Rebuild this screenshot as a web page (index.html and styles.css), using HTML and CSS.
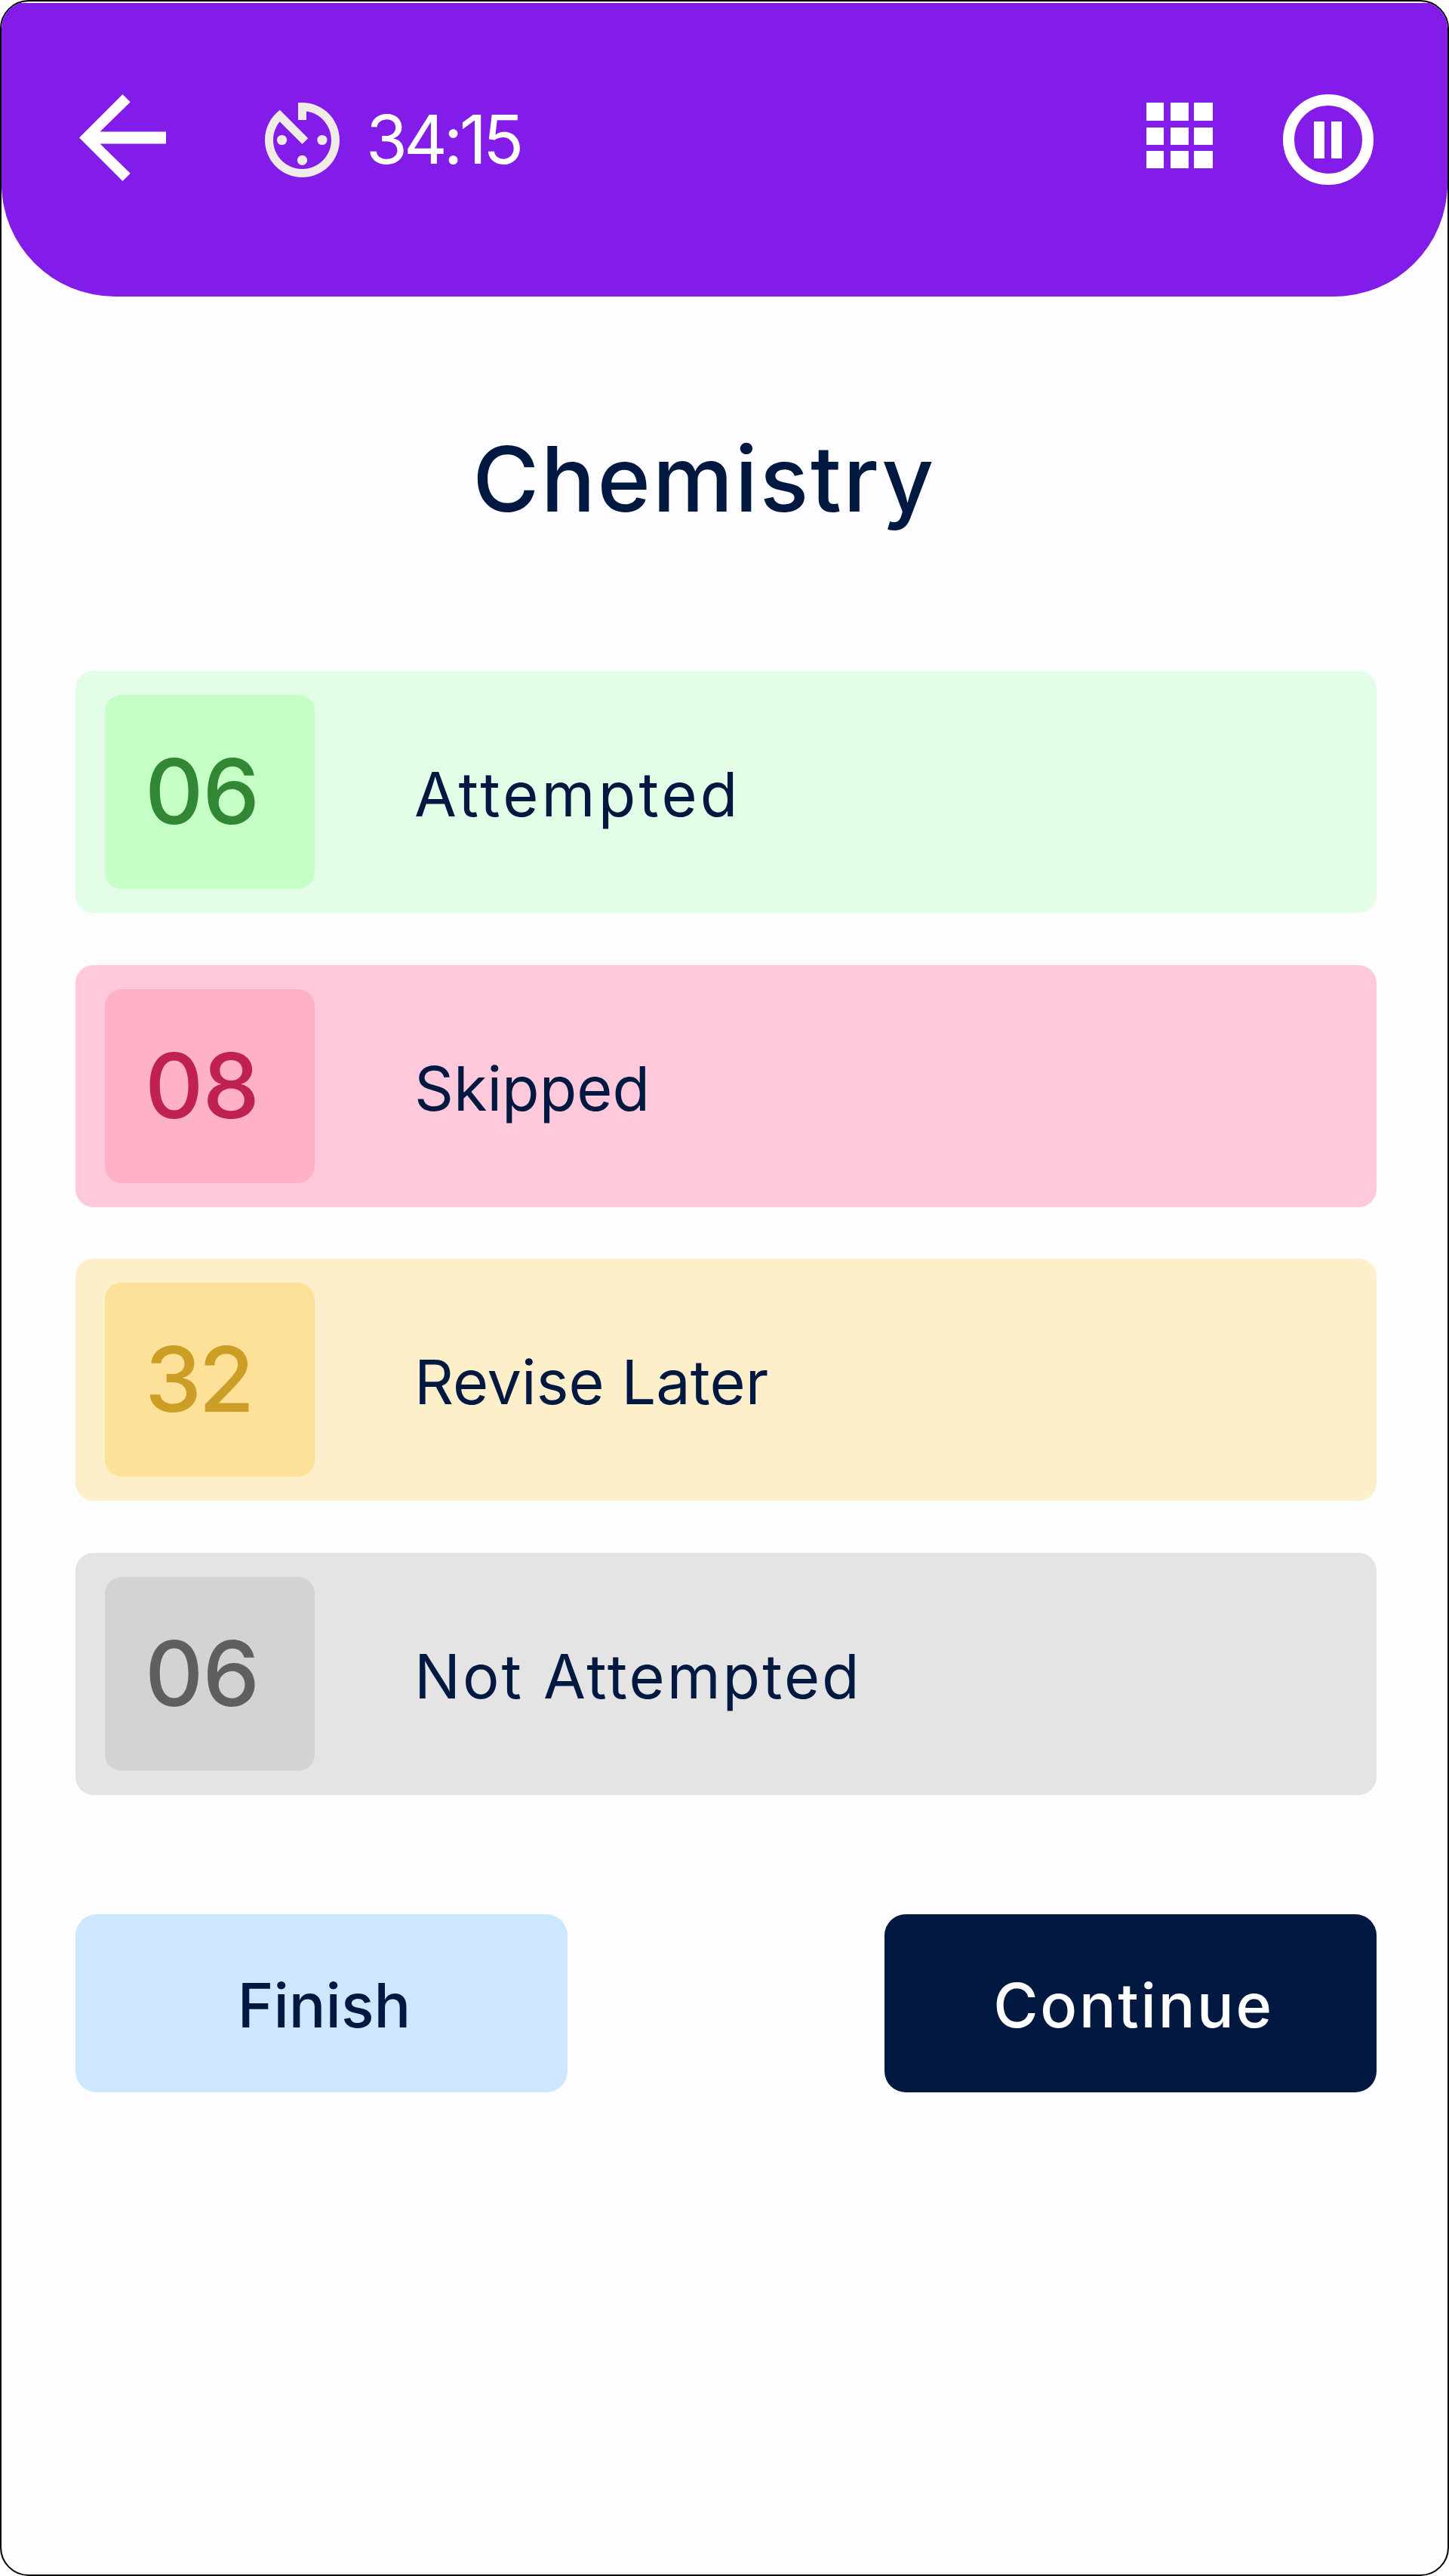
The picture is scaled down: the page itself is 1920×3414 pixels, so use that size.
FILE: index.html
```html
<!DOCTYPE html>
<html lang="en">
<head>
  <meta charset="UTF-8">
  <meta name="viewport" content="width=device-width, initial-scale=1.0">
  <title>Chemistry</title>
  <link rel="stylesheet" href="styles.css">
</head>
<body>
  <div class="screen">
    <header class="header">
      <svg class="back" viewBox="4 4 16 16"><path d="M20 10.9H7.83l5.59-5.49L12 4l-8 8 8 8 1.41-1.41L7.83 13.1H20z"/></svg>
      <svg class="timer-icon" viewBox="3 3 18 18">
        <path d="M11 3v4.2h2V5.08c3.39.49 6 3.39 6 6.92 0 3.87-3.13 7-7 7s-7-3.13-7-7c0-1.68.59-3.22 1.58-4.42L12 13l1.41-1.41-6.8-6.8C4.42 6.45 3 9.05 3 12c0 4.97 4.02 9 9 9s9-4.03 9-9-4.03-9-9-9z"/>
        <circle cx="7.1" cy="12" r="1.2"/>
        <circle cx="16.8" cy="12" r="1.2"/>
        <circle cx="12" cy="16.9" r="1.2"/>
      </svg>
      <span class="time">34:15</span>
      <svg class="grid-icon" viewBox="0 0 88 88">
        <path d="M0 0h23v24H0zM32 0h24v24H32zM63 0h25v24H63zM0 33h23v23H0zM32 33h24v23H32zM63 33h25v23H63zM0 64h23v23H0zM32 64h24v23H32zM63 64h25v23H63z"/>
      </svg>
      <svg class="pause-icon" viewBox="0 0 120 120">
        <circle cx="60" cy="60" r="52.5"/>
        <path d="M41 36h14v49H41zM64 36h14v49H64z"/>
      </svg>
    </header>

    <h1 class="title">Chemistry</h1>

    <div class="list">
      <div class="row green">
        <div class="count">06</div>
        <div class="label attempted">Attempted</div>
      </div>
      <div class="row pink">
        <div class="count">08</div>
        <div class="label">Skipped</div>
      </div>
      <div class="row yellow">
        <div class="count">32</div>
        <div class="label">Revise Later</div>
      </div>
      <div class="row grey">
        <div class="count">06</div>
        <div class="label not-attempted">Not Attempted</div>
      </div>
    </div>

    <div class="buttons">
      <button class="btn finish">Finish</button>
      <button class="btn continue">Continue</button>
    </div>
  </div>
</body>
</html>
```
FILE: styles.css
```css
* {
  margin: 0;
  padding: 0;
  box-sizing: border-box;
  font-family: Inter, "Open Sans", sans-serif;
}
body {
  background-color: #fff;
}
.screen {
  width: 1920px;
  height: 3414px;
  border: 2px solid #000;
  border-radius: 38px;
  background-color: #fdfdff;
  padding-top: 2px;
  overflow: hidden;
  color: #011841;
}
.header {
  height: 389px;
  background-color: #831be9;
  border-radius: 0 0 150px 150px;
  display: flex;
  align-items: flex-start;
  padding: 121px 98px 0 103px;
}
.header svg {
  fill: #fff;
  flex: none;
}
.header .back {
  width: 115px;
  height: 115px;
}
.header .timer-icon {
  width: 99px;
  height: 99px;
  margin: 11px 0 0 131px;
  fill: #efece8;
}
.time {
  color: #fff;
  font-size: 89px;
  line-height: 120px;
  letter-spacing: -4.8px;
  margin-left: 35px;
}
.header .grid-icon {
  width: 88px;
  height: 88px;
  margin: 11px 93px 0 auto;
}
.header .pause-icon {
  width: 120px;
  height: 120px;
}
.pause-icon circle {
  fill: none;
  stroke: #fff;
  stroke-width: 15;
}
.title {
  height: 496px;
  display: flex;
  align-items: center;
  justify-content: center;
  padding: 0 54px 14px 0;
  font-size: 120px;
  font-weight: 500;
  letter-spacing: 2.6px;
}
.list {
  display: flex;
  flex-direction: column;
  gap: 68.5px;
  padding: 0 94px 0 98px;
}
.row {
  height: 321px;
  border-radius: 24px;
  display: flex;
  align-items: center;
  padding-left: 39px;
}
.count {
  width: 278px;
  height: 257px;
  border-radius: 22px;
  padding-left: 53px;
  font-size: 120px;
  font-weight: 500;
  line-height: 255px;
  letter-spacing: -1px;
}
.label {
  margin-left: 132px;
  padding-top: 7px;
  font-size: 81px;
  line-height: 100px;
  white-space: nowrap;
}
.attempted {
  letter-spacing: 4.2px;
}
.not-attempted {
  letter-spacing: 3px;
}
.green {
  background-color: #e4fde6;
}
.green .count {
  background-color: #c5ffc6;
  color: #318733;
}
.pink {
  background-color: #fecadb;
}
.pink .count {
  background-color: #ffb1c7;
  color: #bf2150;
}
.yellow {
  background-color: #feefcb;
}
.yellow .count {
  background-color: #fde199;
  color: #cd9e26;
  letter-spacing: -4px;
}
.grey {
  background-color: #e4e4e4;
}
.grey .count {
  background-color: #d3d3d3;
  color: #5f5f5f;
}
.buttons {
  display: flex;
  justify-content: space-between;
  padding: 158px 94px 0 98px;
}
.btn {
  width: 652px;
  height: 236px;
  border: none;
  border-radius: 28px;
  font-size: 81px;
  font-weight: 500;
  padding-top: 6px;
}
.finish {
  background-color: #cce7fe;
  color: #011841;
  padding-left: 7px;
}
.continue {
  background-color: #011841;
  color: #fff;
  letter-spacing: 2.7px;
  padding-left: 8px;
}
```
